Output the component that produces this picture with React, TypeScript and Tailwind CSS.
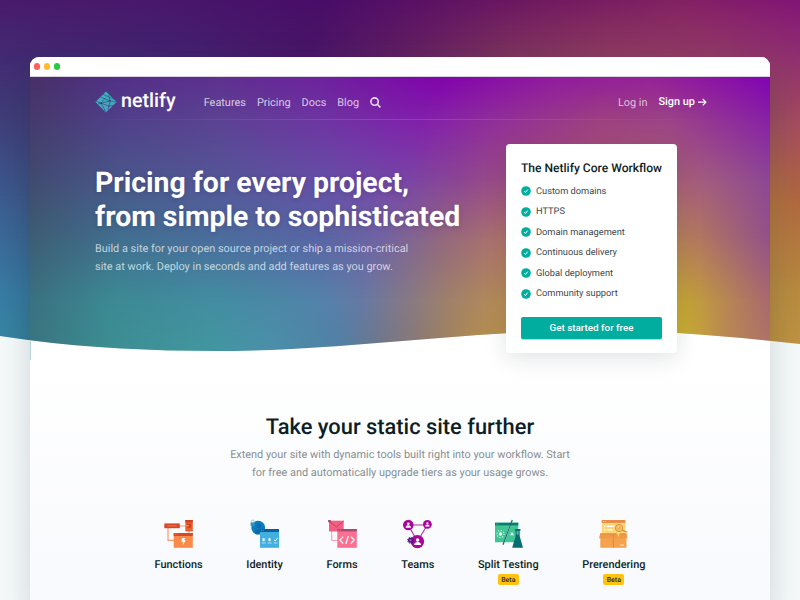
import React from "react";

type MeshRow = { y: number; stops: [string, number][] };

// Colour mesh: each row is a horizontal gradient that fades into the row below it.
function Mesh({ rows, className }: { rows: MeshRow[]; className: string }) {
  return (
    <div className={className}>
      {rows
        .map((row, i) => {
          const next = rows[i + 1];
          const mask = next
            ? `linear-gradient(to bottom, #000 ${row.y}px, transparent ${next.y}px)`
            : undefined;
          return (
            <div
              key={row.y}
              className="absolute inset-0"
              style={{
                background: `linear-gradient(to right, ${row.stops.map(([c, x]) => `${c} ${x}px`).join(", ")})`,
                maskImage: mask,
                WebkitMaskImage: mask,
              }}
            />
          );
        })
        .reverse()}
    </div>
  );
}

const backdrop: MeshRow[] = [
  { y: 0, stops: [["#481b6b", 0], ["#48186c", 160], ["#480d68", 320], ["#5a1064", 420], ["#701960", 540], ["#822162", 680], ["#821577", 800]] },
  { y: 56, stops: [["#422b72", 0], ["#432271", 180], ["#491668", 310], ["#611f62", 400], ["#7f345e", 510], ["#8f3c61", 610], ["#943b68", 710], ["#8f2f70", 800]] },
  { y: 120, stops: [["#3f3f79", 0], ["#3f3b76", 30], ["#9c4b5f", 770], ["#a44b61", 800]] },
  { y: 200, stops: [["#3c5d92", 0], ["#3c5485", 30], ["#b0703f", 770], ["#b0683f", 800]] },
  { y: 290, stops: [["#397ca5", 0], ["#36749b", 30], ["#b58840", 770], ["#b88b40", 800]] },
  { y: 345, stops: [["#3788a5", 0], ["#347d98", 30], ["#b98f3f", 770], ["#c09542", 800]] },
];

const hero: MeshRow[] = [
  { y: 0, stops: [["#473068", 0], ["#523087", 90], ["#5e308f", 190], ["#6d229c", 290], ["#8103ac", 410], ["#901b9f", 520], ["#952296", 620], ["#8b12a5", 690], ["#8104b2", 740]] },
  { y: 43, stops: [["#453a6c", 0], ["#50408a", 90], ["#5c4293", 190], ["#6d35a1", 290], ["#811fab", 390], ["#912f98", 470], ["#9d407f", 570], ["#9b4387", 640], ["#8721a6", 740]] },
  { y: 103, stops: [["#414b70", 0], ["#49578a", 90], ["#555698", 190], ["#654fa6", 290], ["#7745a7", 370], ["#8c4593", 430], ["#a6507c", 500], ["#ae6273", 620], ["#a05a80", 680], ["#8c4795", 740]] },
  { y: 163, stops: [["#3d5e74", 0], ["#417090", 90], ["#4b6e9d", 190], ["#5966a4", 290], ["#7064a2", 350], ["#92687f", 410], ["#b17468", 480], ["#bb8b50", 610], ["#b2785f", 670], ["#935188", 740]] },
  { y: 223, stops: [["#3a7180", 0], ["#3c8993", 80], ["#438da2", 190], ["#5382aa", 290], ["#6579a5", 330], ["#82788a", 370], ["#a0816a", 420], ["#b88d54", 480], ["#c8b030", 620], ["#c3a03a", 660], ["#a96870", 740]] },
  { y: 275, stops: [["#397581", 0], ["#3c8f92", 80], ["#4297a0", 180], ["#4a91aa", 240], ["#5080a5", 310], ["#6f7788", 350], ["#8c7a70", 390], ["#b08a50", 440], ["#c49d40", 520], ["#cdb829", 645], ["#b98655", 700], ["#af7465", 740]] },
];

const workflow = ["Custom domains", "HTTPS", "Domain management", "Continuous delivery", "Global deployment", "Community support"];

function Logo() {
  return (
    <svg width="22" height="22" viewBox="0 0 22 22">
      <defs>
        <linearGradient id="logo" x1="0" y1="0" x2="0.4" y2="1">
          <stop offset="0" stopColor="#2cbcba" />
          <stop offset="1" stopColor="#4b9fc0" />
        </linearGradient>
      </defs>
      <path d="M11 .4 21.6 11 11 21.6.4 11Z" fill="url(#logo)" />
      <path
        d="M5.6 6 15 10M8 3.4 13.6 5.8 19.4 8.4M13.6 4 15 10 13 19.5M3 13 15 10 21 11M6 12.2 10.4 6.8M6 12.2 1 10M6 12.2 14 15.2 18 14.5M6 12.2 11 21"
        fill="none"
        stroke="#493b80"
        strokeWidth="0.6"
      />
      <circle cx="14.8" cy="9.8" r="1" fill="#493b80" />
      <circle cx="6.2" cy="12.2" r="1" fill="#493b80" />
      <circle cx="13.8" cy="15" r=".7" fill="#493b80" />
    </svg>
  );
}

function Check() {
  return (
    <svg width="10" height="10" viewBox="0 0 10 10" className="shrink-0">
      <circle cx="5" cy="5" r="4.8" fill="#00ad9f" />
      <path d="m3.2 5.2 1.2 1.3 2.3-2.9" fill="none" stroke="#fff" strokeWidth="1" />
    </svg>
  );
}

function FunctionsIcon() {
  return (
    <svg width="29" height="29" viewBox="0 0 29 29">
      <path d="M15 7h7M25 11v4M4 9v12.3h6" fill="none" stroke="#f59b74" strokeWidth="1.2" />
      <path d="M.3 4.4h15.5v4.8H.3z" fill="#d84828" />
      <path d="M3.4 6.3h9.3v1.1H3.4z" fill="#f0743f" />
      <path d="M21.3 1h7.5v11.4h-7.5z" fill="#e8602f" />
      <path d="M21.3 1h7.5v2.3h-7.5zM23 4.8h4v4h-4z" fill="#cf4023" />
      <path d="M21 6.7h4" stroke="#f59b74" />
      <path d="M9.7 14h19.1v14.8H9.7z" fill="#fb8948" />
      <path d="M9.7 14h19.1v3H9.7z" fill="#d84828" />
      <path d="M11 15h1M12.8 15h1" stroke="#f59b74" strokeWidth=".8" />
      <path d="M18 19h3l-.8 2.3h1.5l-3 5.2.4-3.7h-1.8z" fill="#fff" />
    </svg>
  );
}

function IdentityIcon() {
  return (
    <svg width="29" height="29" viewBox="0 0 29 29">
      <circle cx="8.2" cy="8.7" r="6.9" fill="#0b7dbd" />
      <circle cx="9" cy="6.8" r="2.3" fill="#0a6bac" />
      <path d="M4.5 13.2c1-3.5 6.5-4 8.5-1v3H6z" fill="#0a6bac" />
      <path d="M1.4 4V2.4a1.3 1.3 0 0 1 2.7 0V4" fill="none" stroke="#74b7d8" strokeWidth=".8" />
      <path d="M.6 3.5h4.2v3.6H.6z" fill="#2b91c9" />
      <path d="M10 10h19v18.8H10z" fill="#41b0e0" />
      <path d="M10 10h19v3H10z" fill="#09609f" />
      <path d="M11 11.5h1M12.7 11.5h1" stroke="#41b0e0" strokeWidth=".8" />
      <path d="M13.7 18.9v3.4M12.2 19.7l3 1.8M15.2 19.7l-3 1.8M19.5 18.9v3.4M18 19.7l3 1.8M21 19.7l-3 1.8" stroke="#fff" strokeWidth=".8" />
      <path d="M11.8 24h3.8M17.7 24h3.8M23.6 24h3.9" stroke="#c7ecfb" strokeWidth=".8" />
      <path d="m24 20.8 1.3 1.2 2.4-3.2" fill="none" stroke="#fff" strokeWidth="1" />
    </svg>
  );
}

function FormsIcon() {
  return (
    <svg width="29" height="29" viewBox="0 0 29 29">
      <path d="M3.7 12v9.4h6" fill="none" stroke="#f88aa5" strokeWidth=".9" />
      <path d="M1 1.7h14.7v10.8H1z" fill="#f15f84" />
      <path d="m1 2 7.4 6 7.3-6" fill="none" stroke="#c73d66" strokeWidth=".9" />
      <path d="M.2 1h2.5v2.3H.2z" fill="#a83d6c" />
      <path d="M9.3 10h19.5v18.8H9.3z" fill="#fa7090" />
      <path d="M9.3 10h19.5v2.4H9.3z" fill="#a94776" />
      <path d="M10.3 11.2h1M12 11.2h1" stroke="#fa7090" strokeWidth=".8" />
      <path d="m15.2 17.7-3.3 3.4 3.3 3.4M22.9 17.7l3.3 3.4-3.3 3.4M20.3 17 17.9 25" fill="none" stroke="#fff" strokeWidth="1.2" />
    </svg>
  );
}

function Person({ x, y, s }: { x: number; y: number; s: number }) {
  return (
    <g transform={`translate(${x} ${y}) scale(${s})`} fill="#fff">
      <circle cx="0" cy="-1.2" r="1.3" />
      <path d="M-2.7 2.7c0-3.3 5.4-3.3 5.4 0z" />
    </g>
  );
}

function TeamsIcon() {
  return (
    <svg width="31" height="30" viewBox="0 0 31 30">
      <path d="M6.3 6h19L15.3 22.5z" fill="none" stroke="#b72bab" strokeWidth="1.1" />
      <g fill="#a9079c">
        <circle cx="6.3" cy="6" r="5.3" />
        <circle cx="25.4" cy="5.3" r="4.4" />
        <circle cx="15.4" cy="22.6" r="6.7" />
      </g>
      <Person x={6.3} y={6} s={1} />
      <Person x={25.4} y={5.3} s={0.85} />
      <Person x={15.6} y={22.6} s={1.3} />
      <circle cx="8.5" cy="21.3" r="3" fill="none" stroke="#4e1680" strokeWidth="1" strokeDasharray="1.2 1.15" />
      <circle cx="8.5" cy="21.3" r="1.8" fill="#b968c4" stroke="#4e1680" strokeWidth="1.5" />
    </svg>
  );
}

function SplitIcon() {
  return (
    <svg width="29" height="29" viewBox="0 0 29 29">
      <path d="M1 3.7h15.5L9.6 23.3H1zM18 3.7h6.3v19.6H10.8z" fill="#40c493" />
      <path d="M1 3.7h23.3v2.7H1z" fill="#087c73" />
      <path d="M2 5h1M3.7 5h1" stroke="#40c493" strokeWidth=".8" />
      <circle cx="6.5" cy="15" r="1.7" fill="#fff" />
      <circle cx="6.5" cy="15" r="3.5" fill="none" stroke="#e1fff3" strokeWidth="1.2" strokeDasharray="1 1.75" />
      <path d="m18 12.8 2 3.4h-4z" fill="#dcfff2" />
      <path d="M18.3 1 9 25.8" stroke="#0a6f6c" strokeWidth="1.2" />
      <path d="M20.8 10h5.7v1.7h-.8v5.5L29 28.8H18.2l3.4-11.6v-5.5h-.8z" fill="#066e72" />
      <path d="M22.6 12h2v3.6h-2z" fill="#58b5a6" />
    </svg>
  );
}

function PrerenderIcon() {
  return (
    <svg width="29" height="29" viewBox="0 0 29 29">
      <path d="M2.7 1h23.6v15H2.7z" fill="#ffd674" />
      <path d="M2.7 1h23.6v2.9H2.7z" fill="#e68b48" />
      <path d="M4 2.5h1M5.8 2.5h1" stroke="#ffd674" strokeWidth=".8" />
      <path d="M5 7.4h1.4M7.7 7.4h7.5M5 10.8h1.4M7.7 10.8h6" stroke="#fff" strokeWidth="1.2" />
      <circle cx="20" cy="9" r="3.6" fill="#f8c465" stroke="#dc9144" strokeWidth="1" />
      <path d="m22.8 11.1 5.4 2" stroke="#dc9144" strokeWidth="1.2" />
      <path d="m18.4 9 1.2 1.2 2-2.4" fill="none" stroke="#dc9144" strokeWidth=".8" />
      <path d="M1.3 14.7h26.2v14.1H1.3z" fill="#f5a14d" />
      <path d="M1.2 14.7h13l-.8 4.6H0zM14.8 14.7h12.7l1 4.6H15.4z" fill="#ef9a48" />
      <path d="M1 14.9h26.6M14.4 15v13.8" stroke="#dd8438" strokeWidth=".8" />
      <path d="M17.7 13.9h3.2l-1.4 4z" fill="#ffd674" />
      <path d="M21 26h4" stroke="#fff0d3" strokeWidth=".9" />
    </svg>
  );
}

const tools = [
  { name: "Functions", icon: <FunctionsIcon />, beta: false },
  { name: "Identity", icon: <IdentityIcon />, beta: false },
  { name: "Forms", icon: <FormsIcon />, beta: false },
  { name: "Teams", icon: <TeamsIcon />, beta: false },
  { name: "Split Testing", icon: <SplitIcon />, beta: true },
  { name: "Prerendering", icon: <PrerenderIcon />, beta: true },
];

export default function App() {
  return (
    <div className="relative h-[600px] w-[800px] overflow-hidden bg-[#f5f9fa] font-['Roboto',sans-serif] [text-rendering:geometricPrecision]">
      <Mesh
        rows={backdrop}
        className="absolute inset-0 [clip-path:path('M0_0H800V344C720_335_640_329_560_331C440_334_340_351_215_351C140_351_70_347_0_336Z')]"
      />
      <div className="relative mx-[30px] mt-[57px] h-[560px] overflow-hidden rounded-t-[9px] bg-linear-to-b from-white from-[55%] to-[#f9fafd] to-[90%] shadow-[0_8px_34px_rgba(20,45,50,0.17)]">
        <div className="flex h-5 items-center gap-[3.6px] border-b border-[#d9d3df] bg-white pl-[4px]">
          <span className="size-[6.2px] rounded-full bg-[#ff5f57]" />
          <span className="size-[6.2px] rounded-full bg-[#ffbd2e]" />
          <span className="size-[6.2px] rounded-full bg-[#28ca41]" />
        </div>

        <div className="relative h-[283px]">
          <Mesh
            rows={hero}
            className="absolute inset-0 [clip-path:path('M-30_-77H770V267C690_258_610_252_530_254C410_257_310_274_185_274C110_274_40_270_-30_259Z')]"
          />
          <div className="absolute bottom-0 left-0 h-[19px] w-px bg-[#b5d5d7]" />

          <header className="relative mx-[65px] flex h-[43px] items-center pt-[6px]">
            <Logo />
            <span className="-mt-px ml-[4px] text-[19.7px] leading-5 font-medium text-white">netlify</span>
            <nav className="ml-[28px] flex items-center gap-[11px] pt-[3px] text-[10.9px] text-white/75">
              <a>Features</a>
              <a>Pricing</a>
              <a>Docs</a>
              <a>Blog</a>
              <svg width="11" height="11" viewBox="0 0 11 11" fill="none" stroke="#eadcf2" strokeWidth="1.6">
                <circle cx="4.6" cy="4.6" r="3.7" />
                <path d="m7.3 7.3 3.1 3.1" />
              </svg>
            </nav>
            <div className="-mr-[2px] ml-auto flex items-center gap-[11px] pt-[1px] text-[10.9px]">
              <a className="pt-[2px] text-white/70">Log in</a>
              <a className="flex items-center gap-[3px] font-medium text-white">
                Sign up
                <svg width="9" height="8" viewBox="0 0 9 8" fill="none" stroke="#fff" strokeWidth="1.2">
                  <path d="M0 4.2h7.7M4.7 1l3.2 3.2-3.2 3.2" />
                </svg>
              </a>
            </div>
            <div className="absolute inset-x-0 bottom-0 h-px bg-linear-to-r from-transparent via-white/15 to-transparent" />
          </header>

          <div className="relative flex px-[65px]">
            <div className="w-[411px] pt-[46px]">
              <h1 className="text-[28.4px] leading-[34px] font-bold whitespace-nowrap text-white [text-shadow:0_1px_5px_rgba(30,30,60,0.2)]">
                Pricing for every project,
                <br />
                from simple to sophisticated
              </h1>
              <p className="mt-[6px] text-[10.92px] leading-[17.5px] whitespace-nowrap text-white/70">
                Build a site for your open source project or ship a mission-critical
                <br />
                site at work. Deploy in seconds and add features as you grow.
              </p>
            </div>
            <section className="mt-[24px] h-[209px] w-[171px] shrink-0 rounded-[4px] bg-white px-[15px] pt-[15px] shadow-[0_5px_22px_rgba(14,30,37,0.13)]">
              <h2 className="text-[12.07px] leading-[18px] font-medium whitespace-nowrap text-[#0e1e25]">The Netlify Core Workflow</h2>
              <ul className="mt-1">
                {workflow.map((item) => (
                  <li key={item} className="flex h-[20.5px] items-center gap-[5px] text-[9.28px] text-[#3b474d]">
                    <Check />
                    <span className="pt-px">{item}</span>
                  </li>
                ))}
              </ul>
              <button className="mt-[13px] block h-[22px] w-[141px] rounded-[2px] bg-[#00ad9f] text-[9.85px] font-medium text-white shadow-[0_1px_1px_rgba(0,60,60,0.25)]">
                Get started for free
              </button>
            </section>
          </div>
        </div>

        <section className="flex flex-col items-center pt-[54px]">
          <h2 className="text-[21.85px] leading-7 font-medium text-[#0e1e25]">Take your static site further</h2>
          <p className="mt-[4px] text-center text-[10.92px] leading-[17.5px] text-[#868e92]">
            Extend your site with dynamic tools built right into your workflow. Start
            <br />
            for free and automatically upgrade tiers as your usage grows.
          </p>
          <div className="mt-[38px] flex items-start gap-[43.7px]">
            {tools.map((tool) => (
              <div key={tool.name} className="flex flex-col items-center">
                <div className="flex h-[30px] items-start">{tool.icon}</div>
                <h3 className="mt-[8px] text-[10.92px] leading-4 font-medium whitespace-nowrap text-[#0e1e25]">{tool.name}</h3>
                {tool.beta && (
                  <span className="mt-[1px] flex h-[11px] w-[21px] items-center justify-center rounded-[2px] bg-[#ffc20e] pt-px text-[7px] font-medium text-[#2c2f20]">
                    Beta
                  </span>
                )}
              </div>
            ))}
          </div>
        </section>
      </div>
    </div>
  );
}
